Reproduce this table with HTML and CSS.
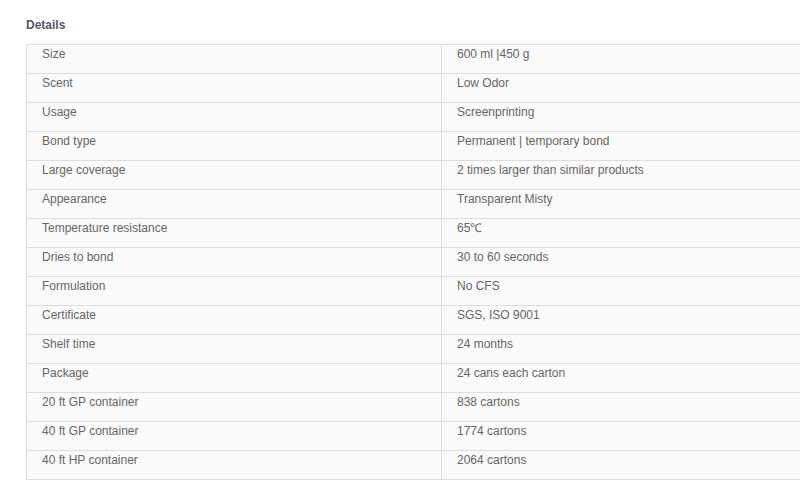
FILE: index.html
```html
<!DOCTYPE html>
<html>
<head>
<meta charset="utf-8">
<link rel="stylesheet" href="styles.css">
</head>
<body>
<div class="page">
  <h2 class="title">Details</h2>
  <table class="details">
    <colgroup><col class="col-key"><col class="col-val"></colgroup>
    <tr><td>Size</td><td>600 ml |450 g</td></tr>
    <tr><td>Scent</td><td>Low Odor</td></tr>
    <tr><td>Usage</td><td>Screenprinting</td></tr>
    <tr><td>Bond type</td><td>Permanent | temporary bond</td></tr>
    <tr><td>Large coverage</td><td>2 times larger than similar products</td></tr>
    <tr><td>Appearance</td><td>Transparent Misty</td></tr>
    <tr><td>Temperature resistance</td><td>65℃</td></tr>
    <tr><td>Dries to bond</td><td>30 to 60 seconds</td></tr>
    <tr><td>Formulation</td><td>No CFS</td></tr>
    <tr><td>Certificate</td><td>SGS, ISO 9001</td></tr>
    <tr><td>Shelf time</td><td>24 months</td></tr>
    <tr><td>Package</td><td>24 cans each carton</td></tr>
    <tr><td>20 ft GP container</td><td>838 cartons</td></tr>
    <tr><td>40 ft GP container</td><td>1774 cartons</td></tr>
    <tr><td>40 ft HP container</td><td>2064 cartons</td></tr>
  </table>
</div>
</body>
</html>
```

FILE: styles.css
```css
html, body {
  margin: 0;
  padding: 0;
  background: #ffffff;
}
.page {
  padding: 18px 0 0 26px;
  font-family: "Liberation Sans", Arial, sans-serif;
  font-size: 12px;
  line-height: 14px;
  color: #666666;
}
.title {
  margin: 0 0 12px 0;
  font-size: 12px;
  line-height: 14px;
  font-weight: bold;
  color: #555865;
}
.details {
  border-collapse: collapse;
  width: 774px;
  table-layout: fixed;
}
.col-key {
  width: 415px;
}
.details td {
  border: 1px solid #dddddd;
  background: #fafafa;
  padding: 2px 15px 12px 15px;
  vertical-align: top;
  color: #666666;
}
.details td:last-child {
  border-right: none;
}
```
